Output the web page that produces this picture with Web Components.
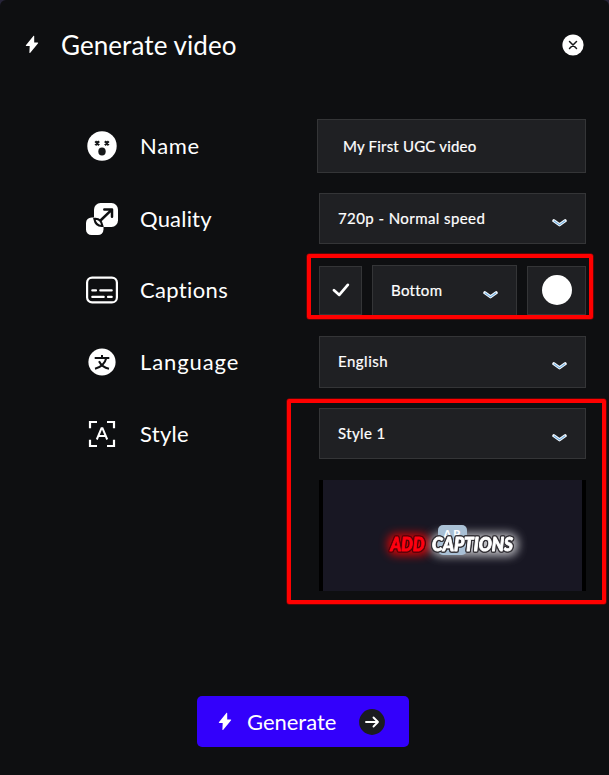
<!DOCTYPE html>
<html lang="en">
<head>
<meta charset="utf-8">
<title>Generate video</title>
<style>
  body {
    margin: 0;
    width: 609px;
    height: 775px;
    overflow: hidden;
    background: #262438;
    color: #fff;
    font-family: Lato, "Open Sans", sans-serif;
  }
</style>
</head>
<body>
<video-dialog>
  <dialog-header slot="header">Generate video</dialog-header>
  <form-row icon="face" label="Name" style="height: 74px; --line: 54px; --spacing: 0.7px">
    <text-field>My First UGC video</text-field>
  </form-row>
  <form-row icon="scale" label="Quality" style="height: 72px; --spacing: 0.2px">
    <select-box style="letter-spacing: 0.42px">720p - Normal speed</select-box>
  </form-row>
  <form-row icon="captions" label="Captions" style="height: 71px; --line: 50px; --spacing: 0.35px">
    <caption-options></caption-options>
  </form-row>
  <form-row icon="language" label="Language" style="height: 72px; --spacing: 0.9px">
    <select-box style="--height: 52px; letter-spacing: 0.5px">English</select-box>
  </form-row>
  <form-row icon="style" label="Style" style="height: 72px; --spacing: 0.3px">
    <select-box style="letter-spacing: 0.4px">Style 1</select-box>
  </form-row>
  <caption-preview></caption-preview>
  <generate-button slot="footer">Generate</generate-button>
  <mark-box slot="marks" style="left: 307px; top: 254px; width: 286px; height: 65px"></mark-box>
  <mark-box slot="marks" style="left: 287px; top: 399px; width: 319px; height: 205px"></mark-box>
</video-dialog>

<script>
const icons = {
  bolt: `<svg width="14" height="19" viewBox="0 0 14 19"><path d="M8.6 .8 .9 10.2q-.4.7.4.7h3.4l-.3 6.6q.2 1 .9.2l7.8-9.5q.4-.8-.5-.8H9.2V1.1q-.1-.7-.6-.3z" fill="#fff"/></svg>`,
  face: `<svg width="32" height="32" viewBox="0 0 32 32"><circle cx="16" cy="16" r="14.7" fill="#fff"/><path d="m9.300 11.300 3.800 3.800m0-3.800-3.800 3.800m9.600-3.800 3.800 3.800m0-3.800-3.800 3.800" stroke="#16181a" stroke-width="2.300"/><ellipse cx="16" cy="21.500" rx="3.700" ry="3.900" fill="#16181a"/></svg>`,
  scale: `<svg width="32" height="32" viewBox="0 0 32 32" fill="none"><rect x="8" width="24" height="24" rx="6.500" fill="#fff"/><rect y="14.500" width="17.500" height="17.500" rx="5.500" fill="#fff"/><path d="M8.300 15.800q6.700-.8 8.200 7.200-6.800.5-8.200-7.200z" stroke="#0e0f11" stroke-width="2"/><path d="M14.500 17.500 25.800 6.700M18.300 6.500h7.700v7.300" stroke="#0e0f11" stroke-width="2.500" stroke-linecap="round" stroke-linejoin="round"/></svg>`,
  captions: `<svg width="32" height="28" viewBox="0 0 32 28" fill="none" stroke="#fff" stroke-linecap="round"><rect x="1.100" y="1.600" width="29.800" height="24.800" rx="5" stroke-width="2.200"/><path d="M6.300 14.400h3.700m4.300 0h11.400M6.300 20.900h11.400m4.300 0h3.700" stroke-width="2.200"/></svg>`,
  language: `<svg width="32" height="32" viewBox="0 0 32 32" fill="none"><circle cx="16" cy="16" r="13.600" fill="#fff"/><path d="M8.700 12h14.600M16 9v3m4.300 0q-2 8.300-11.300 10.700M13 15.300q3 6 10 7.400" stroke="#101113" stroke-width="2"/></svg>`,
  style: `<svg width="32" height="32" viewBox="0 0 32 32" fill="none" stroke="#fff"><path d="M4 10.300V4h7m10 0h7v6.300M28 21.700V28h-7m-10 0H4v-6.300" stroke-width="2.200"/><path d="m10.800 21.500 4.700-11.300h1l4.700 11.300M12.800 18h6.400" stroke-width="2"/></svg>`,
  chevron: `<svg width="15" height="10" viewBox="0 0 15 10" fill="none" stroke-linecap="round" stroke-linejoin="round"><path d="m1.900 2.800 5.600 4 5.600-4" stroke="#f3f8fd" stroke-width="3.200"/><path d="m2.200 3 5.300 3.900L12.800 3" stroke="#71afe0" stroke-width="1.100"/></svg>`,
  check: `<svg width="18" height="14" viewBox="0 0 18 14"><path d="m2 7.200 5.300 4.700L15.800 1.900" fill="none" stroke="#fff" stroke-width="2.700" stroke-linecap="round" stroke-linejoin="round"/></svg>`,
  close: `<svg width="22" height="22" viewBox="0 0 22 22"><circle cx="11" cy="11" r="10.600" fill="#fff"/><path d="m7.500 7.500 7 7m0-7-7 7" stroke="#16181a" stroke-width="1.500" stroke-linecap="round"/></svg>`,
  arrow: `<svg width="26" height="26" viewBox="0 0 26 26"><circle cx="13" cy="13" r="12.900" fill="#1b1c20"/><path d="M7 13h12m-4.500-4.500L19 13l-4.500 4.500" fill="none" stroke="#fff" stroke-width="1.900" stroke-linecap="round" stroke-linejoin="round"/></svg>`,
};

class VideoDialog extends HTMLElement {
  connectedCallback() {
    this.attachShadow({ mode: "open" }).innerHTML = `
      <style>
        :host {
          display: flex;
          flex-direction: column;
          position: relative;
          box-sizing: border-box;
          height: 775px;
          border-radius: 6px 6px 0 0;
          background: #0e0f11;
        }
        .rows { flex: 1; padding: 29px 23px 0 86px; }
        footer { display: flex; justify-content: center; padding: 0 6px 28px 3px; }
      </style>
      <slot name="header"></slot>
      <div class="rows"><slot></slot></div>
      <footer><slot name="footer"></slot></footer>
      <slot name="marks"></slot>`;
  }
}

class DialogHeader extends HTMLElement {
  connectedCallback() {
    this.attachShadow({ mode: "open" }).innerHTML = `
      <style>
        :host {
          display: flex;
          align-items: center;
          box-sizing: border-box;
          height: 90px;
          padding: 0 25px 1px;
          font-size: 26px;
          letter-spacing: 0.08px;
        }
        svg { display: block; }
        h1 { flex: 1; margin: 0 0 0 22px; font: inherit; }
      </style>
      ${icons.bolt}
      <h1><slot></slot></h1>
      ${icons.close}`;
  }
}

class FormRow extends HTMLElement {
  connectedCallback() {
    this.attachShadow({ mode: "open" }).innerHTML = `
      <style>
        :host { display: flex; align-items: flex-start; }
        .icon { display: grid; place-items: center; width: 32px; height: var(--line, 52px); }
        .label {
          flex: 1;
          margin-left: 22px;
          font-size: 22px;
          line-height: var(--line, 52px);
          letter-spacing: var(--spacing);
        }
      </style>
      <div class="icon">${icons[this.getAttribute("icon")]}</div>
      <div class="label">${this.getAttribute("label")}</div>
      <slot></slot>`;
  }
}

class TextField extends HTMLElement {
  connectedCallback() {
    this.attachShadow({ mode: "open" }).innerHTML = `
      <style>
        :host {
          box-sizing: border-box;
          width: 269px;
          height: 54px;
          padding-left: 25px;
          border: 1px solid #343537;
          background: #1f2023;
          font-size: 15px;
          line-height: 52px;
          letter-spacing: 0.2px;
          -webkit-text-stroke: 0.2px;
        }
      </style>
      <slot></slot>`;
  }
}

class SelectBox extends HTMLElement {
  connectedCallback() {
    this.attachShadow({ mode: "open" }).innerHTML = `
      <style>
        :host {
          display: flex;
          justify-content: space-between;
          box-sizing: border-box;
          width: var(--width, 267px);
          height: var(--height, 51px);
          padding: 0 18px;
          border: 1px solid #343537;
          background: #1f2023;
          font-size: 15px;
          line-height: 49px;
          letter-spacing: 0.3px;
          -webkit-text-stroke: 0.2px;
        }
        svg { margin-top: 24px; }
      </style>
      <span><slot></slot></span>
      ${icons.chevron}`;
  }
}

class CaptionOptions extends HTMLElement {
  connectedCallback() {
    this.attachShadow({ mode: "open" }).innerHTML = `
      <style>
        :host { display: flex; gap: 10px; align-items: center; width: 267px; }
        .box {
          display: grid;
          place-items: center;
          box-sizing: border-box;
          height: 49px;
          border: 1px solid #343537;
          background: #1f2023;
        }
        .check { width: 43px; padding-bottom: 2px; }
        .color { width: 59px; padding-bottom: 1px; }
        .color i { width: 30px; height: 30px; border-radius: 50%; background: #fff; }
        select-box { line-height: 48px; }
      </style>
      <div class="box check">${icons.check}</div>
      <select-box style="--width: 145px">Bottom</select-box>
      <div class="box color"><i></i></div>`;
  }
}

class CaptionPreview extends HTMLElement {
  connectedCallback() {
    this.attachShadow({ mode: "open" }).innerHTML = `
      <style>
        :host {
          display: block;
          box-sizing: border-box;
          width: 267px;
          height: 111px;
          margin-left: auto;
          border: solid #000;
          border-width: 0 4px;
          background: #181723;
        }
        svg { display: block; }
        text { font-family: Lato, sans-serif; font-weight: 900; }
        .caption {
          font-size: 19px;
          font-style: italic;
          stroke-width: 0.9px;
          stroke-linejoin: round;
          filter: drop-shadow(1px 0 0 var(--edge)) drop-shadow(-1px 0 0 var(--edge))
            drop-shadow(0 1px 0 var(--edge)) drop-shadow(0 -1px 0 var(--edge));
        }
      </style>
      <svg width="259" height="111" viewBox="0 0 259 111">
        <defs>
          <filter id="glow" x="-40%" y="-150%" width="180%" height="400%"><feGaussianBlur stdDeviation="5"/></filter>
        </defs>
        <rect x="65" y="54" width="41" height="21" rx="8" fill="#f00" opacity=".85" filter="url(#glow)"/>
        <rect x="108" y="53" width="87" height="23" rx="9" fill="#d8d8dc" opacity=".85" filter="url(#glow)"/>
        <rect x="115" y="45" width="29" height="30" rx="5" fill="#a9c0d5"/>
        <text x="120.500" y="58" font-size="11" letter-spacing="2" fill="#fff">AP</text>
        <text class="caption" x="67.500" y="71" textLength="34" lengthAdjust="spacingAndGlyphs" fill="#ff0010" stroke="#ff0010" style="--edge: #5a0208">ADD</text>
        <text class="caption" x="109" y="71" textLength="81" lengthAdjust="spacingAndGlyphs" fill="#fff" stroke="#fff" style="--edge: #333136">CAPTIONS</text>
      </svg>`;
  }
}

class GenerateButton extends HTMLElement {
  connectedCallback() {
    this.attachShadow({ mode: "open" }).innerHTML = `
      <style>
        :host {
          display: flex;
          align-items: center;
          box-sizing: border-box;
          width: 212px;
          height: 51px;
          padding: 0 24px 0 21px;
          border-radius: 5px;
          background: #3300fb;
          font-size: 22px;
          letter-spacing: -0.02px;
        }
        span { flex: 1; margin-left: 15px; }
      </style>
      ${icons.bolt}
      <span><slot></slot></span>
      ${icons.arrow}`;
  }
}

// red annotation frame drawn over the form
class MarkBox extends HTMLElement {
  connectedCallback() {
    this.attachShadow({ mode: "open" }).innerHTML = `
      <style>
        :host {
          position: absolute;
          box-sizing: border-box;
          border: 4px solid #f00;
          border-radius: 2px;
          box-shadow: 0 0 0 0.5px #900;
        }
      </style>`;
  }
}

customElements.define("video-dialog", VideoDialog);
customElements.define("dialog-header", DialogHeader);
customElements.define("form-row", FormRow);
customElements.define("text-field", TextField);
customElements.define("select-box", SelectBox);
customElements.define("caption-options", CaptionOptions);
customElements.define("caption-preview", CaptionPreview);
customElements.define("generate-button", GenerateButton);
customElements.define("mark-box", MarkBox);
</script>
</body>
</html>
